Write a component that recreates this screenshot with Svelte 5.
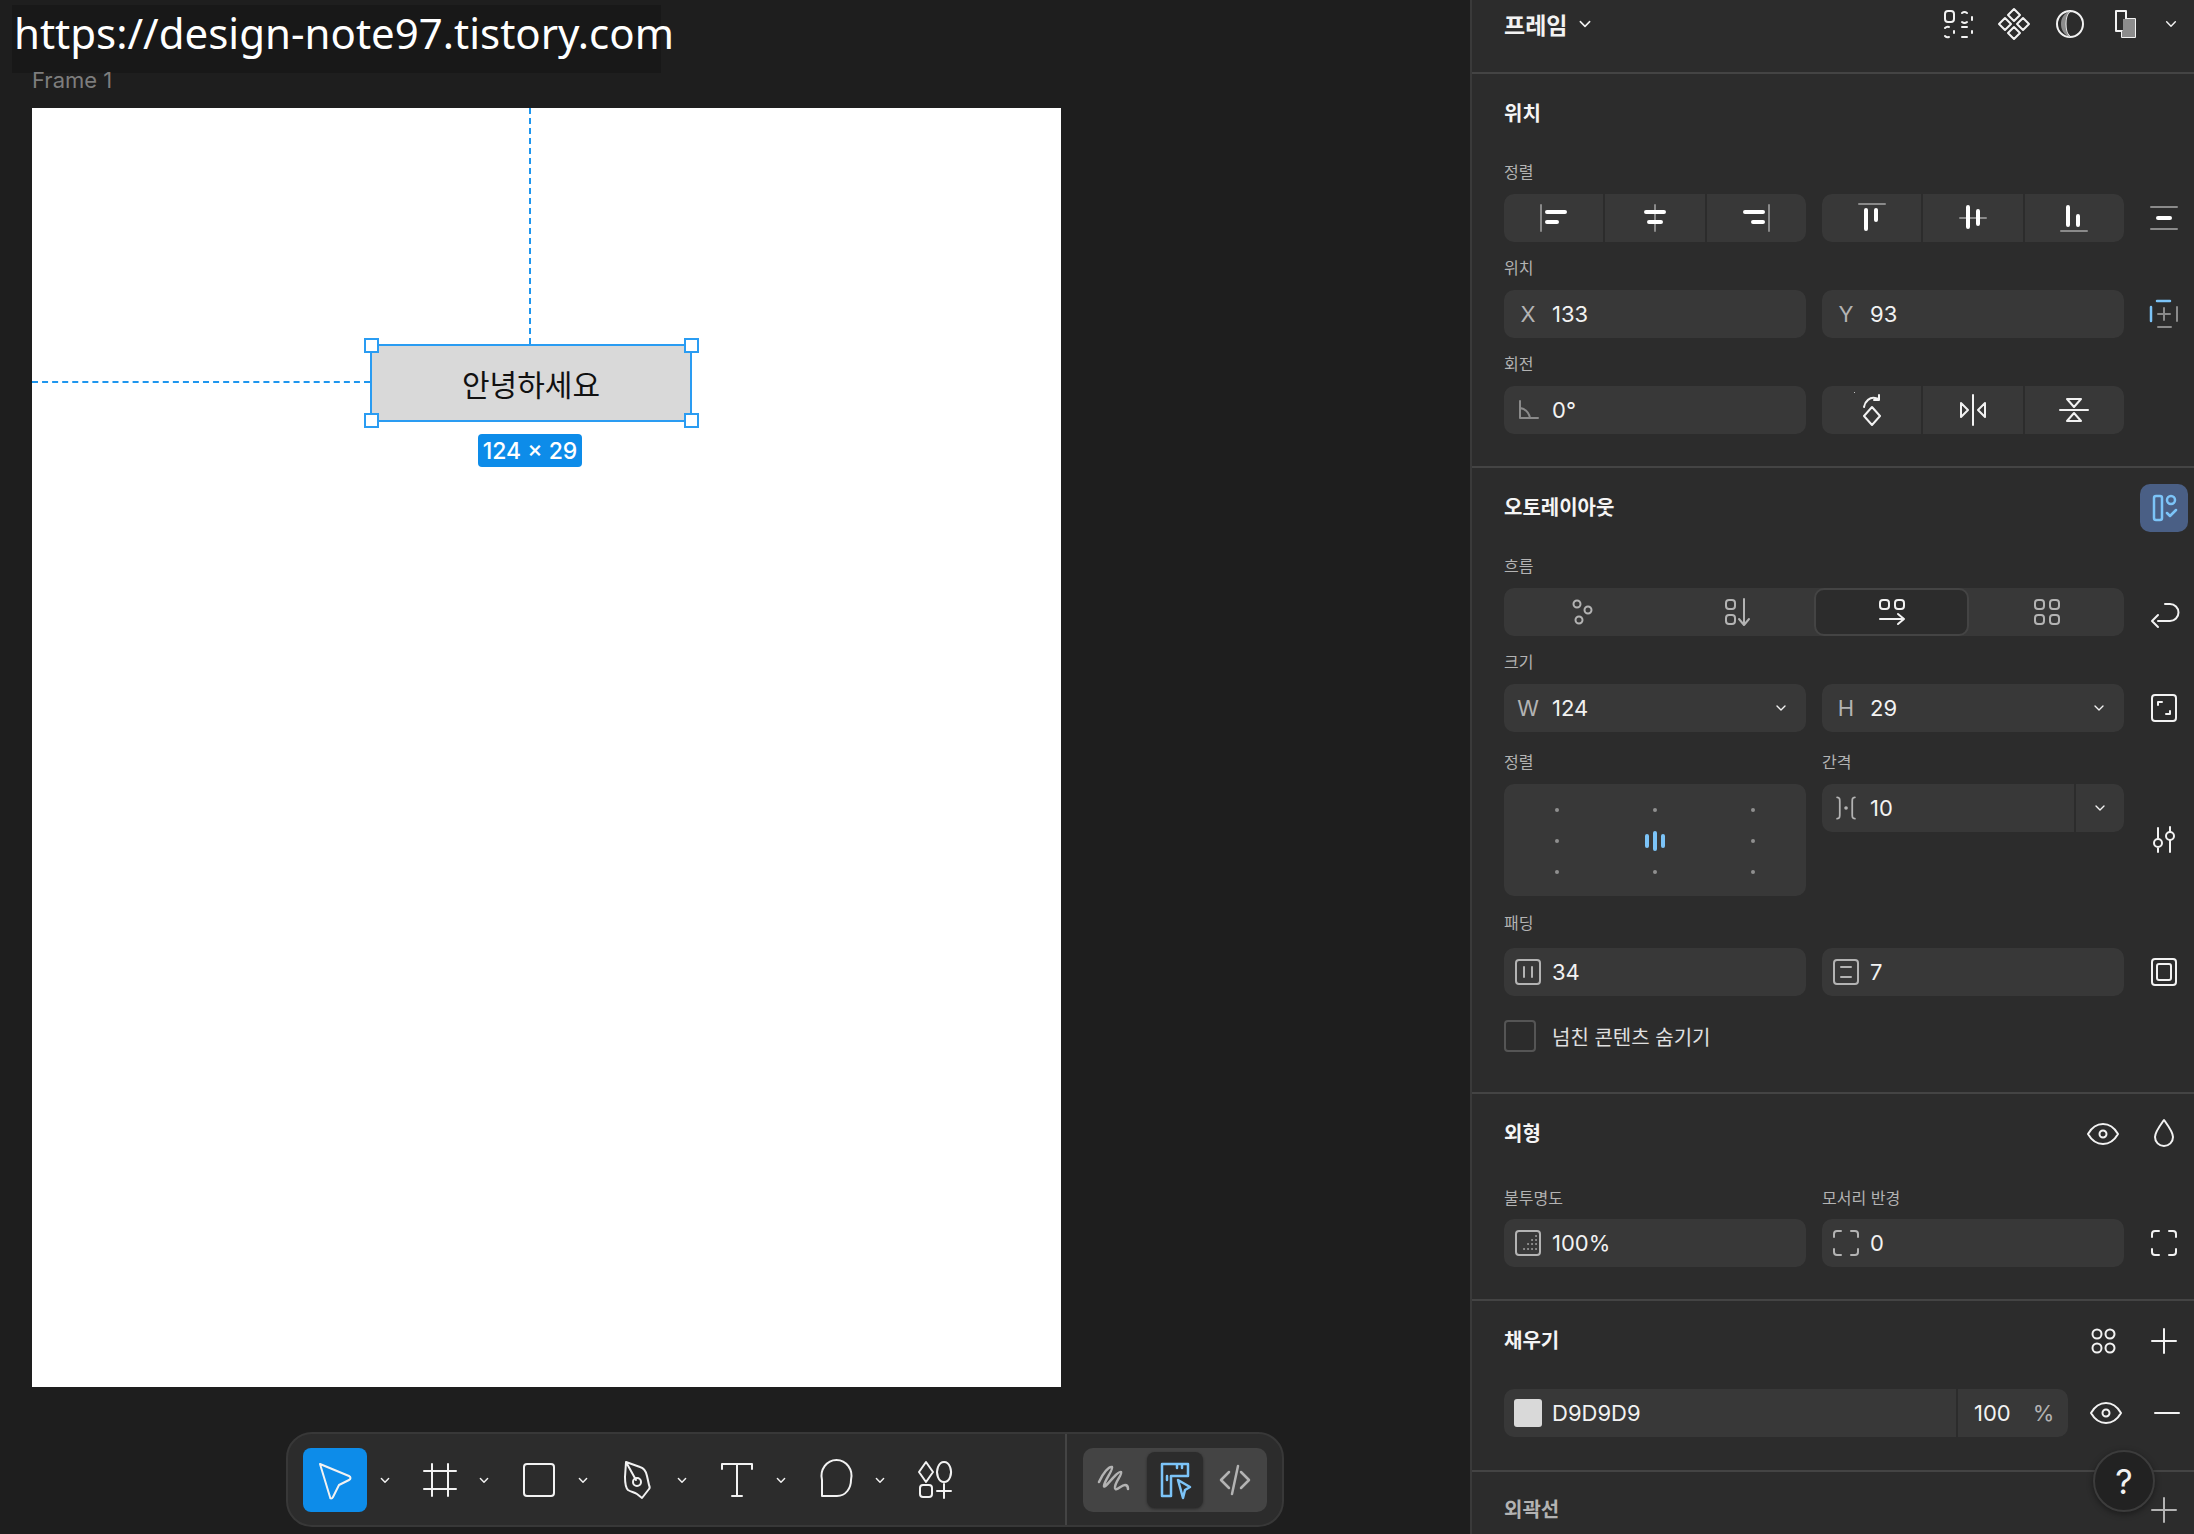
<script>
	// small helpers for building icon paths
	const c = (x, y, r) => `M${x - r} ${y}a${r} ${r} 0 1 0 ${2 * r} 0a${r} ${r} 0 1 0 ${-2 * r} 0Z`;
	const rr = (x, y, w, h, r) =>
		`M${x + r} ${y}h${w - 2 * r}a${r} ${r} 0 0 1 ${r} ${r}v${h - 2 * r}a${r} ${r} 0 0 1 ${-r} ${r}h${-(w - 2 * r)}a${r} ${r} 0 0 1 ${-r} ${-r}v${-(h - 2 * r)}a${r} ${r} 0 0 1 ${r} ${-r}Z`;

	const i = {
		alignL: [['M5 5v26', 'dim'], ['M11 12h18M11 22h10', 'bar']],
		alignC: [['M18 5v26', 'dim'], ['M9 12h18M12 22h12', 'bar']],
		alignR: [['M31 5v26', 'dim'], ['M7 12h18M15 22h10', 'bar']],
		alignT: [['M5 4h26', 'dim'], ['M12 10v19M22 10v10', 'bar']],
		alignM: [['M5 18h26', 'dim'], ['M13 7v20M23 11v13', 'bar']],
		alignB: [['M5 31h26', 'dim'], ['M12 7v18M22 16v9', 'bar']],
		dist: [['M5 7h26M5 29h26', 'dim'], ['M12 18h12', 'bar']],
		constraint: [['M11 5h13M5 11v14', 'blue'], ['M18 12v12M12 18h12M31 11v14M12 31h13', 'dim']],
		angle: [['M10 9v17h18M10 16c6 1 9 5 10 10', 'dim']],
		rotate: [[rr(0, 0, 0, 0, 0) + 'M18 15l8 9-8 9-8-9ZM10 15c1-6 6-10 11-9l4 1M25 3v5h-5', '']],
		flipH: [['M18 3v30', ''], ['M6 11l7 7-7 7ZM30 11l-7 7 7 7Z', '']],
		flipV: [['M4 18h28', ''], ['M11 7h14l-7 8ZM11 29h14l-7-8Z', '']],
		autoOn: [[rr(8, 6, 8, 24, 2) + c(25, 10, 4) + 'M21 23l3 3 6-6', 'blue']],
		flowFree: [[c(13, 10, 3.5) + c(24, 16, 3.5) + c(15, 26, 3.5), 'soft']],
		flowV: [[rr(7, 6, 9, 9, 3) + rr(7, 21, 9, 9, 3) + 'M25 5v25M20 25l5 6 5-6', 'soft']],
		flowH: [[rr(6, 6, 9, 9, 3) + rr(21, 6, 9, 9, 3) + 'M6 25h24M24 20l6 5-6 5', '']],
		flowGrid: [[rr(6, 6, 9, 9, 3) + rr(21, 6, 9, 9, 3) + rr(6, 21, 9, 9, 3) + rr(21, 21, 9, 9, 3), 'soft']],
		wrap: [['M12 27h12a8 8 0 0 0 0-17h-5M12 21l-6 6 6 6M0 0', '']],
		resize: [[rr(6, 5, 24, 26, 3), ''], ['M12 15v-3h4M24 21v3h-4', '']],
		tune: [[c(12, 21, 4) + c(24, 14, 4) + 'M12 6v11M12 25v5M24 5v5M24 18v12', '']],
		gap: [['M8 6c3 0 3 2 3 5v14c0 3 0 5-3 5M28 6c-3 0-3 2-3 5v14c0 3 0 5 3 5', 'soft'], ['M18 18h.1', 'dot']],
		padH: [[rr(6, 6, 24, 24, 3) + 'M14 13v10M22 13v10', 'soft']],
		padV: [[rr(6, 6, 24, 24, 3) + 'M13 13h10M13 23h10', 'soft']],
		padAll: [[rr(6, 5, 24, 26, 3), ''], [rr(11, 10, 14, 16, 2), '']],
		eye: [['M3 18c4-7 9-10 15-10s11 3 15 10c-4 7-9 10-15 10S7 25 3 18Z' + c(18, 18, 3.5), '']],
		drop: [['M18 4c5 7 9 12 9 17a9 9 0 0 1-18 0c0-5 4-10 9-17Z', '']],
		opacity: [[rr(6, 6, 24, 24, 3), 'soft'], ['M26 11h.1M26 15h.1M22 15h.1M26 19h.1M22 19h.1M18 19h.1M26 24h.1M22 24h.1M18 24h.1M14 24h.1', 'dots']],
		corner: [['M6 12V9a3 3 0 0 1 3-3h4M23 6h4a3 3 0 0 1 3 3v3M30 24v3a3 3 0 0 1-3 3h-4M13 30H9a3 3 0 0 1-3-3v-3', 'soft']],
		cornerW: [['M6 12V9a3 3 0 0 1 3-3h4M23 6h4a3 3 0 0 1 3 3v3M30 24v3a3 3 0 0 1-3 3h-4M13 30H9a3 3 0 0 1-3-3v-3', '']],
		styles: [[c(12, 11, 4.5) + c(25, 11, 4.5) + c(12, 25, 4.5) + c(25, 25, 4.5), '']],
		plus: [['M18 6v24M6 18h24', '']],
		plusDim: [['M18 6v24M6 18h24', 'soft']],
		minus: [['M6 18h24', '']],
		chev: [['M13 16l5 5 5-5', '']],
		chevB: [['M12 15l6 6 6-6', '']],
		compGrid: [[rr(5, 5, 9, 11, 3), ''], ['M22 7a4 4 0 0 1 5 0M32 11v3M27 16a4 4 0 0 1-5 0M5 22a4 4 0 0 1 4-1M14 25v2M9 31a4 4 0 0 1-4-1M22 21h5M32 25v2M22 31h5', '']],
		component: [['M18 3l6 6-6 6-6-6ZM9 12l6 6-6 6-6-6ZM27 12l6 6-6 6-6-6ZM18 21l6 6-6 6-6-6Z', '']],
		mask: [[c(18, 18, 13) + 'M18 5c-6 4-6 22 0 26', ''], ['M18 5c-7 3-9 8-9 13s2 10 9 13c-6-5-6-21 0-26Z', 'fillg']],
		boolean: [['M8 5h10v8h9v18H14v-6H8Z', ''], ['M15 13h12v18H14v-6h1Z', 'fillg']]
	};

	const t = {
		move: [['M9 8l29 12c2 1 2 3 0 4l-10 5-6 12c-1 2-3 2-3 0Z', '']],
		frame: [['M16 8v32M32 8v32M8 15h32M8 33h32', '']],
		rect: [[rr(9, 8, 30, 32, 3), '']],
		pen: [['M12 6l14 5c4 1 6 4 7 9l2 9c1 2 1 3 0 4l-7 9-5-4c-3-2-6-2-9-4-3-3-3-8-3-13ZM12 6l10 18', ''], [c(23, 26, 4), '']],
		text: [['M9 13V8h30v5M24 8v32M19 40h10', '']],
		shape: [['M10 40V24a15 16 0 1 1 29 0c0 8-5 16-14 16Z', '']],
		comps: [['M15 6l7 10-7 10-7-10ZM33 6a7 10 0 1 0 .1 0ZM12 29h6a3 3 0 0 1 3 3v6a3 3 0 0 1-3 3h-6a3 3 0 0 1-3-3v-6a3 3 0 0 1 3-3ZM33 28v14M26 35h14', '']],
		draw: [['M8 26c4-9 10-16 13-15 2 2-8 14-8 19 0 4 14-16 17-14 2 2-7 11-6 16 1 4 6-3 10-3 2 0 3 2 3 4', 'greyw']],
		dev: [['M11 30V8h26v12H20M11 30v10h9V20M26 8v4M31 8v4M16 20v4', 'blue'], ['M27 24l12 7-5 3-2 8Z', 'blue']],
		code: [['M18 16l-8 8 8 8M30 16l8 8-8 8M27 10l-6 28', 'greyw']]
	};

	const tools = [
		{ icon: t.move, active: true },
		{ icon: t.frame },
		{ icon: t.rect },
		{ icon: t.pen },
		{ icon: t.text },
		{ icon: t.shape },
		{ icon: t.comps, last: true }
	];
</script>

{#snippet ic(paths, size = 36, cls = '')}
	<svg class="ic {cls}" width={size} height={size} viewBox="0 0 36 36">
		{#each paths as p}<path d={p[0]} class={p[1]} />{/each}
	</svg>
{/snippet}

{#snippet ti(paths)}
	<svg class="ic tool-ic" width="48" height="48" viewBox="0 0 48 48">
		{#each paths as p}<path d={p[0]} class={p[1]} />{/each}
	</svg>
{/snippet}

<div class="app">
	<main class="canvas">
		<div class="watermark">https://design-note97.tistory.com</div>
		<div class="frame-name">Frame 1</div>

		<div class="frame">
			<div class="guide-v"></div>
			<div class="guide-h"></div>
			<div class="node">
				안녕하세요
				<span class="handle tl"></span>
				<span class="handle tr"></span>
				<span class="handle bl"></span>
				<span class="handle br"></span>
			</div>
			<div class="size-badge">124 × 29</div>
		</div>

		<div class="toolbar">
			<div class="tool-list">
				{#each tools as tool}
					<button class="tool" class:active={tool.active}>{@render ti(tool.icon)}</button>
					{#if !tool.last}
						<span class="tool-chev">{@render ic(i.chev, 26)}</span>
					{/if}
				{/each}
			</div>
			<div class="modes">
				<button class="mode">{@render ti(t.draw)}</button>
				<button class="mode on">{@render ti(t.dev)}</button>
				<button class="mode">{@render ti(t.code)}</button>
			</div>
		</div>
	</main>

	<aside class="panel">
		<header class="top">
			<div class="top-title"><b>프레임</b>{@render ic(i.chevB, 28)}</div>
			<div class="top-icons">
				{@render ic(i.compGrid)}
				{@render ic(i.component)}
				{@render ic(i.mask)}
				{@render ic(i.boolean)}
				<span class="top-chev">{@render ic(i.chevB, 26)}</span>
			</div>
		</header>

		<section class="sec sec-pos">
			<h2>위치</h2>
			<div class="label first">정렬</div>
			<div class="row">
				<div class="seg">
					<button>{@render ic(i.alignL)}</button>
					<button>{@render ic(i.alignC)}</button>
					<button>{@render ic(i.alignR)}</button>
				</div>
				<div class="seg">
					<button>{@render ic(i.alignT)}</button>
					<button>{@render ic(i.alignM)}</button>
					<button>{@render ic(i.alignB)}</button>
				</div>
				<div class="side">{@render ic(i.dist)}</div>
			</div>
			<div class="label">위치</div>
			<div class="row">
				<div class="field"><span class="pre">X</span>133</div>
				<div class="field"><span class="pre">Y</span>93</div>
				<div class="side">{@render ic(i.constraint)}</div>
			</div>
			<div class="label">회전</div>
			<div class="row">
				<div class="field"><span class="pre">{@render ic(i.angle)}</span>0°</div>
				<div class="seg">
					<button>{@render ic(i.rotate)}</button>
					<button>{@render ic(i.flipH)}</button>
					<button>{@render ic(i.flipV)}</button>
				</div>
			</div>
		</section>

		<section class="sec sec-auto">
			<div class="head">
				<h2>오토레이아웃</h2>
				<div class="auto-on">{@render ic(i.autoOn)}</div>
			</div>
			<div class="label flow-label">흐름</div>
			<div class="row">
				<div class="flow">
					<button>{@render ic(i.flowFree)}</button>
					<button>{@render ic(i.flowV)}</button>
					<button class="on">{@render ic(i.flowH)}</button>
					<button>{@render ic(i.flowGrid)}</button>
				</div>
				<div class="side">{@render ic(i.wrap)}</div>
			</div>
			<div class="label">크기</div>
			<div class="row">
				<div class="field"><span class="pre">W</span>124<span class="end">{@render ic(i.chevB, 24)}</span></div>
				<div class="field"><span class="pre">H</span>29<span class="end">{@render ic(i.chevB, 24)}</span></div>
				<div class="side">{@render ic(i.resize)}</div>
			</div>
			<div class="row labels">
				<div class="label">정렬</div>
				<div class="label">간격</div>
			</div>
			<div class="row top-align">
				<div class="grid9">
					{#each Array(9) as _, n}
						{#if n === 4}
							<span class="bars"><i></i><i></i><i></i></span>
						{:else}
							<span class="dot9"></span>
						{/if}
					{/each}
				</div>
				<div class="field split"><span class="pre">{@render ic(i.gap, 32)}</span>10<span class="drop">{@render ic(i.chevB, 24)}</span></div>
				<div class="side">{@render ic(i.tune)}</div>
			</div>
			<div class="label pad-label">패딩</div>
			<div class="row">
				<div class="field"><span class="pre">{@render ic(i.padH)}</span>34</div>
				<div class="field"><span class="pre">{@render ic(i.padV)}</span>7</div>
				<div class="side">{@render ic(i.padAll)}</div>
			</div>
			<div class="clip"><span class="check"></span>넘친 콘텐츠 숨기기</div>
		</section>

		<section class="sec sec-look">
			<div class="head">
				<h2>외형</h2>
				<div class="head-icons">{@render ic(i.eye)}{@render ic(i.drop)}</div>
			</div>
			<div class="row labels look-labels">
				<div class="label">불투명도</div>
				<div class="label">모서리 반경</div>
			</div>
			<div class="row">
				<div class="field"><span class="pre">{@render ic(i.opacity)}</span>100%</div>
				<div class="field"><span class="pre">{@render ic(i.corner)}</span>0</div>
				<div class="side">{@render ic(i.cornerW)}</div>
			</div>
		</section>

		<section class="sec sec-fill">
			<div class="head">
				<h2>채우기</h2>
				<div class="head-icons">{@render ic(i.styles)}{@render ic(i.plus)}</div>
			</div>
			<div class="fill-row">
				<div class="fill-field">
					<span class="swatch"></span>
					<span class="hex">D9D9D9</span>
					<span class="pct">100</span>
					<span class="pct-sign">%</span>
				</div>
				<div class="head-icons">{@render ic(i.eye)}{@render ic(i.minus)}</div>
			</div>
		</section>

		<section class="sec sec-stroke">
			<div class="head">
				<h2 class="muted">외곽선</h2>
				<div class="head-icons">{@render ic(i.plusDim)}</div>
			</div>
		</section>

		<button class="help">?</button>
	</aside>
</div>

<style>
	:global(body) {
		margin: 0;
		background: #1e1e1e;
	}

	.app {
		display: grid;
		grid-template-columns: 1470px 724px;
		height: 1534px;
		overflow: hidden;
		font-family: Inter, 'Noto Sans CJK KR', sans-serif;
		color: #f2f2f2;
	}

	button {
		border: 0;
		padding: 0;
		background: none;
		color: inherit;
		font: inherit;
		display: flex;
		align-items: center;
		justify-content: center;
	}

	/* icons */
	.ic {
		display: block;
		flex: none;
		fill: none;
		stroke: #f2f2f2;
		stroke-width: 2;
		stroke-linecap: round;
		stroke-linejoin: round;
	}
	.ic :global(.dim) {
		stroke: #8a8a8a;
	}
	.ic :global(.soft) {
		stroke: #b3b3b3;
	}
	.ic :global(.bar) {
		stroke: #fff;
		stroke-width: 4;
	}
	.ic :global(.blue) {
		stroke: #7cc4f8;
		stroke-width: 2.5;
	}
	.ic :global(.dot) {
		stroke: #b3b3b3;
		stroke-width: 4;
	}
	.ic :global(.dots) {
		stroke: #999;
		stroke-width: 2;
	}
	.ic :global(.fillg) {
		fill: #8c8c8c;
		stroke: none;
	}
	.ic :global(.greyw) {
		stroke: #b3b3b3;
		stroke-width: 2.5;
	}

	/* canvas */
	.canvas {
		position: relative;
		overflow: hidden;
		background: #1e1e1e;
	}
	.watermark {
		position: absolute;
		left: 12px;
		top: 5px;
		width: 649px;
		height: 68px;
		box-sizing: border-box;
		padding-left: 2px;
		background: #181818;
		color: #fff;
		font-family: 'Noto Sans', sans-serif;
		font-size: 42px;
		line-height: 56px;
		white-space: nowrap;
	}
	.frame-name {
		position: absolute;
		left: 32px;
		top: 66px;
		color: #7d7d7d;
		font-size: 22px;
		line-height: 28px;
	}
	.frame {
		position: absolute;
		left: 32px;
		top: 108px;
		width: 1029px;
		height: 1279px;
		background: #fff;
	}
	.guide-v {
		position: absolute;
		left: 497px;
		top: 0;
		height: 236px;
		border-left: 2px dashed #1e96ee;
	}
	.guide-h {
		position: absolute;
		left: 0;
		top: 273px;
		width: 338px;
		border-top: 2px dashed #1e96ee;
	}
	.node {
		position: absolute;
		left: 338px;
		top: 236px;
		width: 322px;
		height: 78px;
		box-sizing: border-box;
		border: 2px solid #2a9cf2;
		background: #d9d9d9;
		color: #111;
		font-size: 30px;
		display: flex;
		align-items: center;
		justify-content: center;
	}
	.handle {
		position: absolute;
		width: 15px;
		height: 15px;
		box-sizing: border-box;
		border: 2px solid #2a9cf2;
		background: #fff;
	}
	.tl {
		left: -8px;
		top: -8px;
	}
	.tr {
		right: -9px;
		top: -8px;
	}
	.bl {
		left: -8px;
		bottom: -8px;
	}
	.br {
		right: -9px;
		bottom: -8px;
	}
	.size-badge {
		position: absolute;
		left: 446px;
		top: 326px;
		width: 104px;
		height: 33px;
		border-radius: 4px;
		background: #0d8ce9;
		color: #fff;
		font-size: 23px;
		font-weight: 500;
		display: flex;
		align-items: center;
		justify-content: center;
	}

	.toolbar {
		position: absolute;
		left: 286px;
		top: 1432px;
		width: 998px;
		height: 95px;
		box-sizing: border-box;
		display: flex;
		align-items: center;
		background: #2c2c2c;
		border: 2px solid #383838;
		border-radius: 26px;
	}
	.tool-list {
		width: 779px;
		height: 100%;
		box-sizing: border-box;
		padding-left: 15px;
		display: flex;
		align-items: center;
		gap: 0;
		border-right: 2px solid #444;
	}
	.tool {
		width: 64px;
		height: 64px;
		border-radius: 8px;
	}
	.tool-list .tool:not(:first-child) {
		width: 52px;
		margin-left: 14px;
	}
	.tool.active {
		background: #0d8ce9;
	}
	.tool-chev {
		width: 30px;
		margin-left: 3px;
		display: flex;
		justify-content: center;
	}
	.modes {
		margin-left: 16px;
		width: 184px;
		height: 64px;
		box-sizing: border-box;
		padding: 4px;
		display: flex;
		justify-content: space-between;
		background: #444;
		border-radius: 10px;
	}
	.mode {
		width: 56px;
		border-radius: 8px;
	}
	.mode.on {
		background: #2c2c2c;
		box-shadow: 0 1px 3px rgba(0, 0, 0, 0.4);
	}

	/* right panel */
	.panel {
		position: relative;
		box-sizing: border-box;
		height: 1534px;
		overflow: hidden;
		background: #2c2c2c;
		border-left: 2px solid #3a3a3a;
	}
	.top {
		height: 72px;
		box-sizing: content-box;
		border-bottom: 2px solid #444;
		display: flex;
		justify-content: space-between;
		padding: 0 8px 0 32px;
	}
	.top-title {
		height: 48px;
		display: flex;
		align-items: center;
		gap: 4px;
		font-size: 23px;
	}
	.top-title b {
		font-weight: 700;
	}
	.top-icons {
		height: 48px;
		display: flex;
		align-items: center;
		gap: 20px;
		padding-right: 2px;
	}
	.top-chev {
		margin-left: -6px;
	}

	.sec {
		padding-left: 32px;
		border-bottom: 2px solid #444;
	}
	h2 {
		margin: 0;
		font-size: 20px;
		line-height: 24px;
		font-weight: 700;
		color: #f5f5f5;
	}
	h2.muted {
		color: #b3b3b3;
	}
	.head {
		height: 48px;
		display: flex;
		align-items: center;
		justify-content: space-between;
		padding-right: 6px;
	}
	.head-icons {
		display: flex;
		align-items: center;
		gap: 25px;
		padding-right: 6px;
	}
	.label {
		height: 48px;
		display: flex;
		align-items: center;
		padding-top: 2px;
		box-sizing: border-box;
		font-size: 16px;
		color: #b3b3b3;
	}
	.row {
		display: grid;
		grid-template-columns: 302px 302px 48px;
		column-gap: 16px;
		height: 48px;
	}
	.row.top-align {
		height: 112px;
	}
	.row.labels {
		height: 52px;
	}
	.row.labels .label {
		height: 52px;
		padding-top: 6px;
	}
	.side {
		grid-column: 3;
		display: flex;
		align-items: center;
		justify-content: center;
	}
	.seg {
		display: grid;
		grid-template-columns: repeat(3, 1fr);
		column-gap: 2px;
		border-radius: 10px;
		overflow: hidden;
	}
	.seg button {
		background: #383838;
	}
	.field {
		position: relative;
		height: 48px;
		display: flex;
		align-items: center;
		background: #383838;
		border-radius: 10px;
		font-size: 22px;
		color: #f2f2f2;
	}
	.pre {
		width: 48px;
		display: flex;
		justify-content: center;
		flex: none;
		color: #b3b3b3;
		font-size: 22px;
	}
	.end {
		margin-left: auto;
		margin-right: 13px;
	}
	.drop {
		margin-left: auto;
		width: 48px;
		height: 48px;
		display: flex;
		align-items: center;
		justify-content: center;
		border-left: 2px solid #2c2c2c;
	}

	.sec-pos {
		padding-top: 28px;
		padding-bottom: 32px;
	}
	.label.first {
		margin-top: 20px;
	}
	.sec-auto {
		padding-top: 16px;
		padding-bottom: 40px;
	}
	.auto-on {
		width: 48px;
		height: 48px;
		border-radius: 10px;
		background: #4a5f85;
		display: flex;
		align-items: center;
		justify-content: center;
	}
	.flow-label {
		height: 56px;
		padding-top: 10px;
	}
	.flow {
		grid-column: 1 / 3;
		display: grid;
		grid-template-columns: repeat(4, 1fr);
		background: #383838;
		border-radius: 10px;
	}
	.flow .on {
		background: #2c2c2c;
		border: 2px solid #444;
		border-radius: 10px;
	}
	.grid9 {
		height: 112px;
		box-sizing: border-box;
		padding: 10px 4px;
		display: grid;
		grid-template-columns: repeat(3, 1fr);
		grid-template-rows: repeat(3, 31px);
		place-items: center;
		background: #383838;
		border-radius: 10px;
	}
	.dot9 {
		width: 4px;
		height: 4px;
		border-radius: 50%;
		background: #8f8f8f;
	}
	.bars {
		display: flex;
		align-items: center;
		gap: 4px;
	}
	.bars i {
		width: 4px;
		height: 14px;
		border-radius: 2px;
		background: #7cc4f8;
	}
	.bars i:nth-child(2) {
		height: 20px;
	}
	.pad-label {
		height: 52px;
		padding-top: 0;
	}
	.clip {
		margin-top: 24px;
		height: 32px;
		display: flex;
		align-items: center;
		gap: 16px;
		font-size: 20px;
		color: #e0e0e0;
	}
	.check {
		width: 32px;
		height: 32px;
		box-sizing: border-box;
		border: 2px solid #555;
		border-radius: 4px;
		background: #2c2c2c;
	}

	.sec-look {
		padding-top: 16px;
		padding-bottom: 32px;
	}
	.row.look-labels {
		height: 61px;
	}
	.row.look-labels .label {
		height: 61px;
		padding-top: 16px;
	}
	.sec-fill {
		padding-top: 16px;
		padding-bottom: 33px;
	}
	.fill-row {
		margin-top: 24px;
		display: flex;
		align-items: center;
		gap: 20px;
	}
	.fill-field {
		width: 564px;
		height: 48px;
		display: flex;
		align-items: center;
		background: #383838;
		border-radius: 10px;
		font-size: 22px;
	}
	.swatch {
		width: 28px;
		height: 28px;
		margin-left: 10px;
		border-radius: 3px;
		background: #d9d9d9;
	}
	.hex {
		margin-left: 10px;
		width: 406px;
		height: 48px;
		line-height: 48px;
		border-right: 2px solid #2c2c2c;
		box-sizing: border-box;
		flex: none;
	}
	.pct {
		margin-left: 16px;
	}
	.pct-sign {
		margin-left: 22px;
		color: #b3b3b3;
	}
	.sec-stroke {
		padding-top: 14px;
		border-bottom: 0;
	}

	.help {
		position: absolute;
		left: 621px;
		top: 1450px;
		width: 62px;
		height: 62px;
		border-radius: 50%;
		background: #222;
		border: 2px solid #3c3c3c;
		box-sizing: border-box;
		box-shadow: 0 2px 6px rgba(0, 0, 0, 0.4);
		font-size: 34px;
		color: #f2f2f2;
	}
</style>
